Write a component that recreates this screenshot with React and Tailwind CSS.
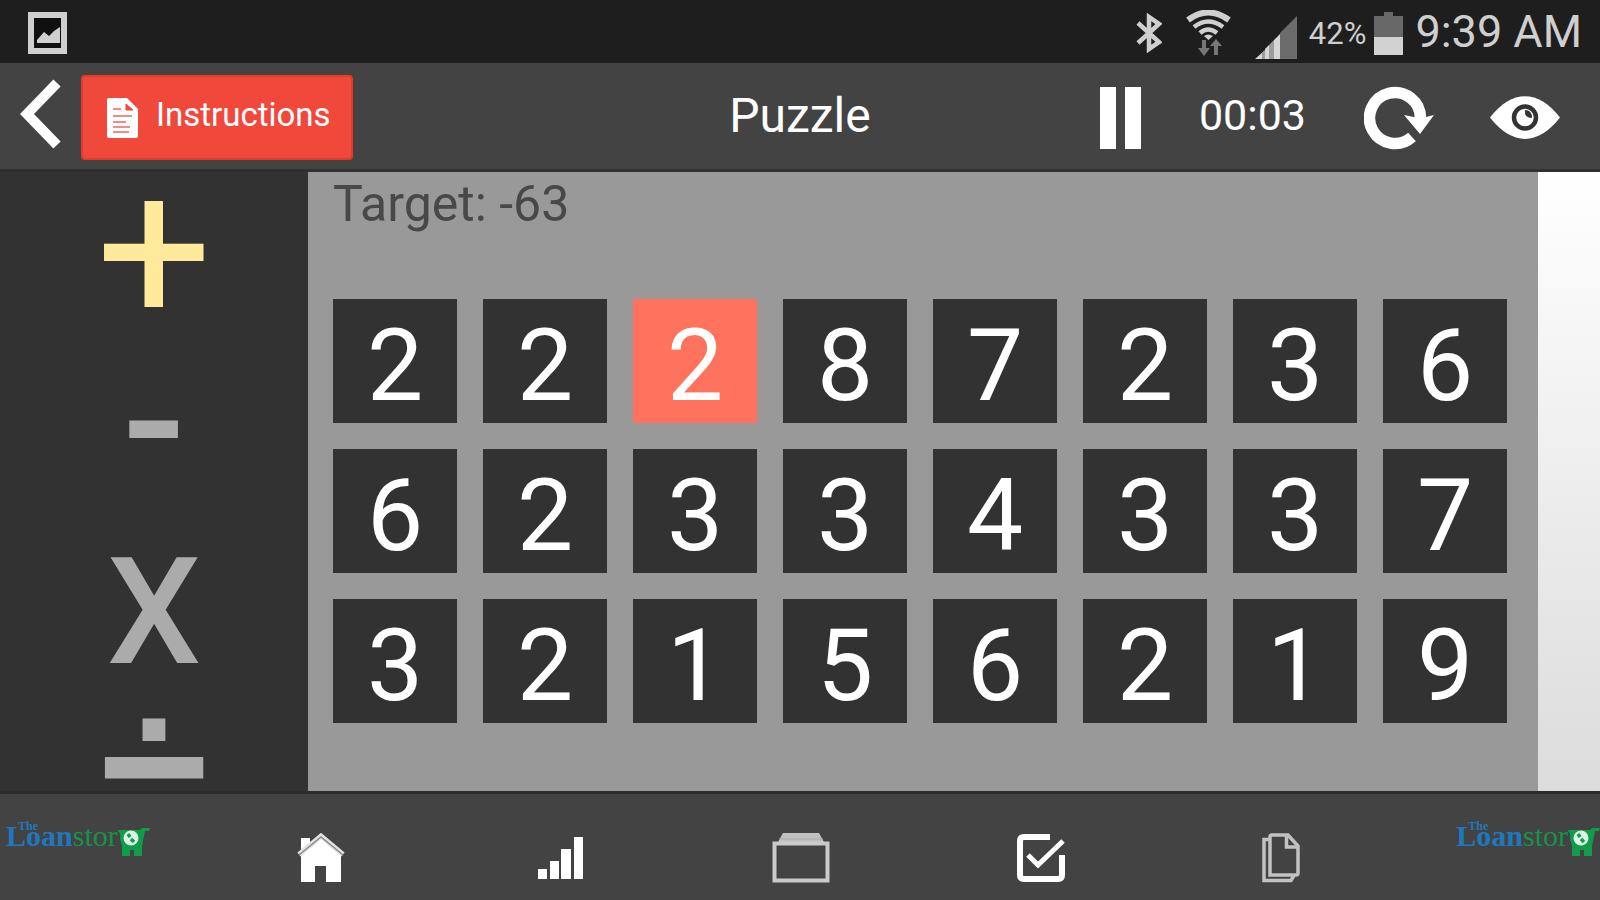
import React, { useState } from "react";

const operators = [
  { symbol: "+", label: "Add", style: "h-[162px] leading-[162px] text-[204px]" },
  { symbol: "-", label: "Subtract", style: "h-[176px] leading-[176px] text-[188px] font-medium" },
  { symbol: "X", label: "Multiply", style: "h-[204px] leading-[204px] text-[149px] font-medium" },
  { symbol: "÷", label: "Divide", style: "h-[104px] leading-[100px] text-[196px] font-['Liberation_Sans',sans-serif] font-bold" },
];

const numbers = [2, 2, 2, 8, 7, 2, 3, 6, 6, 2, 3, 3, 4, 3, 3, 7, 3, 2, 1, 5, 6, 2, 1, 9];

function StatusBar() {
  return (
    <div className="flex h-[63px] shrink-0 items-center bg-[#1e1e1e] pt-[3px] pr-[18px] pl-7 text-[#cfcfcf]">
      <svg className="h-[42px] w-[39px]" viewBox="0 0 39 42" aria-hidden="true">
        <rect x="3" y="3" width="33" height="36" fill="#101010" stroke="#cfcfcf" strokeWidth="6" />
        <path d="M9 31v-3l7-8 5 4 5-5 6-4v16z" fill="#cfcfcf" />
      </svg>
      <div className="ml-auto flex items-center">
        <svg className="h-10 w-[26px]" viewBox="0 0 26 40" fill="none" stroke="#cfcfcf" strokeWidth="4.500" aria-hidden="true">
          <path d="M2 10l21 19-10 7V4l10 7L2 30" />
        </svg>
        <svg className="ml-6 h-[46px] w-[45px]" viewBox="0 0 45 46" fill="none" aria-hidden="true">
          <g stroke="#cfcfcf" strokeWidth="6">
            <path d="M2 10Q22 -5 43 10" />
            <path d="M8 17Q22 6 37 17" strokeWidth="4.500" />
            <path d="M14 23Q22 16 31 23" strokeWidth="4.500" />
          </g>
          <path d="M18 26Q22 23 27 26L22.500 30z" fill="#cfcfcf" />
          <path d="M18 30v9M30 34v11" stroke="#777" strokeWidth="4" />
          <path d="M12 38h12l-6 8zM24 36h12l-6-7z" fill="#777" />
        </svg>
        <svg className="ml-6 h-[52px] w-[42px]" viewBox="0 -8 42 52" aria-hidden="true">
          <path d="M25 18L42 1v43H25z" fill="#6c6c6c" />
          <path d="M0 44l9-8v8zM10 34l4-4v14h-4zM19 25l6-6v25h-6z" fill="#d6d6d6" />
          <path d="M14 30l5-5v19h-5zM7 38l3-3v9H7z" fill="#9c9c9c" />
        </svg>
        <span className="ml-3 text-[31px] leading-none">42%</span>
        <svg className="ml-2 h-[43px] w-[29px]" viewBox="0 0 29 43" aria-hidden="true">
          <path d="M0 4h10V0h9v4h10v22H0z" fill="#686868" />
          <path d="M0 25h29v18H0z" fill="#d2d2d2" />
        </svg>
        <span className="ml-3 pb-1 text-[45px] leading-none">9:39 AM</span>
      </div>
    </div>
  );
}

function Header() {
  const [paused, setPaused] = useState(false);
  return (
    <header className="grid h-[109px] shrink-0 grid-cols-[1fr_auto_1fr] items-center border-b-[3px] border-[#303030] bg-[#434343] px-5 pt-[3px] text-white">
      <div className="flex items-center gap-5">
        <button type="button" aria-label="Back" className="pb-2">
          <svg className="h-[70px] w-[41px]" viewBox="0 0 41 70" fill="none" stroke="white" strokeWidth="10" aria-hidden="true">
            <path d="M37 4L7 35l30 31" />
          </svg>
        </button>
        <button type="button" className="flex h-[85px] items-center gap-[18px] rounded border-2 border-[#e6392b] bg-[#f1483c] pr-5 pl-6 text-[33px]">
          <svg className="h-10 w-[31px]" viewBox="0 0 31 40" aria-hidden="true">
            <path d="M2 0h18l11 11v27q0 2-2 2H2q-2 0-2-2V2q0-2 2-2z" fill="white" />
            <path d="M19 6v6h7z" fill="#f1483c" stroke="#f1483c" />
            <path d="M6 11h8M6 18h19M6 24h13M6 29h17M6 34h16" stroke="#f58c84" strokeWidth="2" />
          </svg>
          <span className="pb-1.5 leading-none">Instructions</span>
        </button>
      </div>
      <h1 className="pb-1 text-[48px] leading-none">Puzzle</h1>
      <div className="flex items-center justify-end pr-5">
        <button type="button" aria-label="Pause" aria-pressed={paused} onClick={() => setPaused(!paused)}>
          <svg className="h-[62px] w-[41px]" viewBox="0 0 41 62" fill="white" aria-hidden="true">
            <path d="M0 0h16v62H0zM25 0h16v62H25z" />
          </svg>
        </button>
        <time className="ml-[58px] pb-1 text-[43px] leading-none">00:03</time>
        <button type="button" aria-label="Restart" className="ml-[58px]">
          <svg className="h-16 w-[70px]" viewBox="0 0 70 64" aria-hidden="true">
            <path d="M48 51A25.500 25.500 0 1 1 56.500 32" fill="none" stroke="white" strokeWidth="11.500" />
            <path d="M40 29l10 2h12l8-2-14 19z" fill="white" />
          </svg>
        </button>
        <button type="button" aria-label="Show solution" className="ml-14">
          <svg className="h-[43px] w-[70px]" viewBox="0 0 70 43" aria-hidden="true">
            <path d="M0 21.500C22-7 48-7 70 21.500C48 50 22 50 0 21.500z" fill="white" />
            <circle cx="35" cy="21.500" r="11" fill="white" stroke="#333" strokeWidth="4.500" />
            <path d="M35 14q-1 8 7 8q0-8-7-8z" fill="#333" />
          </svg>
        </button>
      </div>
    </header>
  );
}

function Logo() {
  return (
    <a href="#store" aria-label="The Loan store" className="relative flex h-10 items-start font-['Liberation_Serif',serif] text-[30px] leading-[30px]">
      <span className="font-bold text-[#1f78bd]">Loan</span>
      <span className="text-[#16934a]">stor</span>
      <svg className="mt-1.5 h-[30px] w-[32px]" viewBox="0 0 32 30" aria-hidden="true">
        <path d="M0 3h22l2-2h8l-1 3h-4l-3 15v10h-8v-6h-4v6H4V19L2 12Q3 6 0 4z" fill="#119c4c" />
        <circle cx="13" cy="11" r="7.500" fill="#dcf4e3" />
        <path d="M10 7l2 3M13 12l3 3" stroke="#119c4c" strokeWidth="3.500" />
      </svg>
      <span className="absolute top-0 left-3 text-[12px] leading-[10px] font-bold text-[#1f78bd]">The</span>
    </a>
  );
}

function Footer() {
  return (
    <footer className="flex h-[109px] shrink-0 justify-between border-t-[3px] border-[#2c2c2c] bg-[#434343] pt-[27px] pl-1.5">
      <Logo />
      <nav className="mr-1 grid h-[62px] max-w-[1200px] flex-1 grid-cols-5 justify-items-center pt-3">
        <a href="#home" aria-label="Home">
          <svg className="h-[50px] w-[48px]" viewBox="0 0 48 50" aria-hidden="true">
            <path d="M4 22V5h9v8z" fill="white" />
            <path d="M4 21L24 5l20 16v28H29V33H18v16H4z" fill="white" />
            <path d="M2 21.500L24 3l22 18.500" fill="none" stroke="#e2e2e2" strokeWidth="5" />
            <path d="M2 22L24 4l22 18" fill="none" stroke="#8b8b8b" strokeWidth="1.500" />
          </svg>
        </a>
        <a href="#scores" aria-label="Scores">
          <svg className="h-[50px] w-[46px]" viewBox="0 0 46 50" fill="white" aria-hidden="true">
            <path d="M0 36h9v10H0zM12 28h9v18h-9zM23 16h10v30H23zM36 4h9v42h-9z" />
          </svg>
        </a>
        <a href="#levels" aria-label="Levels">
          <svg className="h-[50px] w-[58px]" viewBox="0 0 58 50" aria-hidden="true">
            <path d="M11 0h36l5 9H6z" fill="#c0c0c0" />
            <path d="M7 6h44" stroke="#aaa" />
            <path d="M2.500 10.500h53v37h-53z" fill="none" stroke="#cacaca" strokeWidth="4" />
          </svg>
        </a>
        <a href="#tasks" aria-label="Tasks">
          <svg className="h-[50px] w-[50px]" viewBox="0 0 50 50" fill="none" stroke="white" strokeWidth="6" aria-hidden="true">
            <path d="M34 4H8q-4 0-4 4v34q0 4 4 4h34q4 0 4-4V22" />
            <path d="M12 22l10 10L47 8" strokeWidth="5" />
          </svg>
        </a>
        <a href="#pages" aria-label="Pages">
          <svg className="h-[50px] w-[38px]" viewBox="0 0 38 50" fill="none" stroke="#c2c2c2" strokeWidth="3.500" aria-hidden="true">
            <path d="M7 6.500H2v41h27l3-5" />
            <path d="M10 2h16l10 11V40q0 2-2 2H8V4q0-2 2-2z" />
            <path d="M24.500 3v11H36" />
          </svg>
        </a>
      </nav>
      <Logo />
    </footer>
  );
}

export default function App() {
  const [operator, setOperator] = useState("+");
  const [selected, setSelected] = useState(2);
  return (
    <div className="flex h-screen flex-col overflow-hidden font-['Roboto',sans-serif]">
      <StatusBar />
      <Header />
      <main className="flex min-h-0 flex-1 bg-linear-to-b from-white to-[#dcdcdc]">
        <div className="flex w-[308px] shrink-0 flex-col overflow-hidden bg-[#323232]">
          {operators.map(({ symbol, label, style }) => (
            <button
              key={symbol}
              type="button"
              aria-label={label}
              aria-pressed={operator === symbol}
              onClick={() => setOperator(symbol)}
              className={
                "shrink-0 " + style + " " +
                (operator === symbol ? "text-[#ffe99b]" : "text-[#ababab]")
              }
            >
              {symbol}
            </button>
          ))}
        </div>
        <section className="min-w-0 flex-1 bg-[#999999] pr-[31px] pl-[25px]">
          <p className="pt-1 text-[50px] leading-[56px] text-[#484848]">Target: -63</p>
          <div className="mt-[67px] grid grid-cols-8 gap-[26px]">
            {numbers.map((n, i) => (
              <button
                key={i}
                type="button"
                aria-pressed={selected === i}
                onClick={() => setSelected(i)}
                className={
                  "flex aspect-square items-center justify-center pt-2.5 text-[100px] leading-none text-white " +
                  (selected === i ? "bg-[#ff725e]" : "bg-[#323232]")
                }
              >
                {n}
              </button>
            ))}
          </div>
        </section>
        <div className="w-[62px] shrink-0" />
      </main>
      <Footer />
    </div>
  );
}
